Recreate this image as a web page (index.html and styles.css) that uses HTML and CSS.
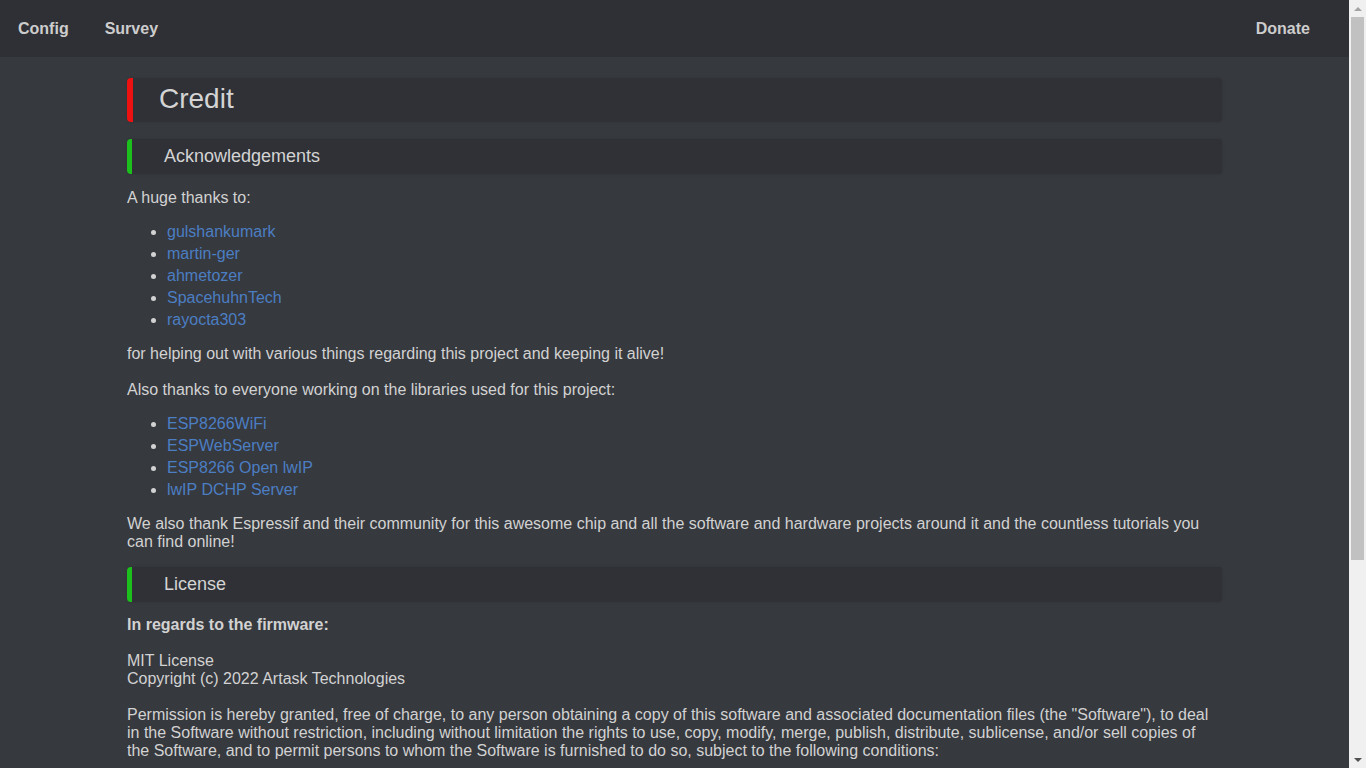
FILE: index.html
```html
<!DOCTYPE html>
<html lang="en">
<head>
<meta charset="utf-8">
<title>Credit</title>
<link rel="stylesheet" href="styles.css">
</head>
<body>
<nav class="topnav">
  <a class="nav-link" href="#">Config</a>
  <a class="nav-link" href="#">Survey</a>
  <span class="nav-spacer"></span>
  <a class="nav-link" href="#">Donate</a>
</nav>
<main class="content">
  <h1 class="heading heading-main">Credit</h1>

  <h2 class="heading heading-sub">Acknowledgements</h2>
  <p>A huge thanks to:</p>
  <ul class="links">
    <li><a href="#">gulshankumark</a></li>
    <li><a href="#">martin-ger</a></li>
    <li><a href="#">ahmetozer</a></li>
    <li><a href="#">SpacehuhnTech</a></li>
    <li><a href="#">rayocta303</a></li>
  </ul>
  <p>for helping out with various things regarding this project and keeping it alive!</p>
  <p class="spaced">Also thanks to everyone working on the libraries used for this project:</p>
  <ul class="links">
    <li><a href="#">ESP8266WiFi</a></li>
    <li><a href="#">ESPWebServer</a></li>
    <li><a href="#">ESP8266 Open lwIP</a></li>
    <li><a href="#">lwIP DCHP Server</a></li>
  </ul>
  <p>We also thank Espressif and their community for this awesome chip and all the software and hardware projects around it and the countless tutorials you can find online!</p>

  <h2 class="heading heading-sub heading-license">License</h2>
  <p class="license"><b>In regards to the firmware:</b><br><br>MIT License<br>Copyright (c) 2022 Artask Technologies<br><br>Permission is hereby granted, free of charge, to any person obtaining a copy of this software and associated documentation files (the "Software"), to deal in the Software without restriction, including without limitation the rights to use, copy, modify, merge, publish, distribute, sublicense, and/or sell copies of the Software, and to permit persons to whom the Software is furnished to do so, subject to the following conditions:<br><br>The above copyright notice and this permission notice shall be included in all copies or substantial portions of the Software.<br><br>THE SOFTWARE IS PROVIDED "AS IS", WITHOUT WARRANTY OF ANY KIND, EXPRESS OR IMPLIED, INCLUDING BUT NOT LIMITED TO THE WARRANTIES OF MERCHANTABILITY, FITNESS FOR A PARTICULAR PURPOSE AND NONINFRINGEMENT. IN NO EVENT SHALL THE AUTHORS OR COPYRIGHT HOLDERS BE LIABLE FOR ANY CLAIM, DAMAGES OR OTHER LIABILITY, WHETHER IN AN ACTION OF CONTRACT, TORT OR OTHERWISE, ARISING FROM, OUT OF OR IN CONNECTION WITH THE SOFTWARE OR THE USE OR OTHER DEALINGS IN THE SOFTWARE.</p>
</main>
<div class="fake-scrollbar" aria-hidden="true">
  <span class="sb-arrow sb-up"></span>
  <span class="sb-track"><span class="sb-thumb"></span></span>
  <span class="sb-arrow sb-down"></span>
</div>
</body>
</html>
```

FILE: styles.css
```css
html {
  background: #36393e;
}
body {
  margin: 0 17px 0 0;
  background: #36393e;
  color: #d2d2d2;
  font-family: "Liberation Sans", Arial, sans-serif;
  font-size: 16px;
}
.topnav {
  display: flex;
  align-items: center;
  height: 57px;
  background: #2f3035;
  padding-right: 21px;
}
.nav-link {
  padding: 0 18px;
  color: #cdcdcd;
  font-weight: bold;
  text-decoration: none;
  line-height: 57px;
}
.nav-spacer {
  flex: 1;
}
.content {
  max-width: 1095px;
  margin: 0 auto;
  padding: 21px 0 40px;
}
.heading {
  background: #2f3136;
  border-radius: 4px;
  font-weight: normal;
  color: #d4d4d4;
  box-shadow: 0 0 3px rgba(0, 0, 0, 0.12);
}
.heading-main {
  margin: 0 0 17px;
  height: 44px;
  line-height: 42px;
  font-size: 28px;
  padding-left: 26px;
  border-left: 6px solid #ee1111;
}
.heading-sub {
  margin: 0 0 15px;
  height: 35px;
  line-height: 34px;
  font-size: 18px;
  padding-left: 32px;
  border-left: 5px solid #1cc01c;
}
.heading-license {
  margin-top: 16px;
  margin-bottom: 14px;
}
p {
  margin: 0 0 16px;
  line-height: 18px;
}
p.spaced {
  margin-top: 18px;
}
.links {
  margin: 0 0 16px;
  padding-left: 40px;
  line-height: 18px;
}
.links li + li {
  margin-top: 4px;
}
.links a {
  color: #4c7ec3;
  text-decoration: none;
}
.license {
  margin-bottom: 0;
}

/* emulated classic browser scrollbar shown in the reference */
.fake-scrollbar {
  position: fixed;
  top: 0;
  right: 0;
  bottom: 0;
  width: 17px;
  background: #f0f0f0;
  display: flex;
  flex-direction: column;
}
.sb-arrow {
  height: 17px;
  flex: none;
  display: flex;
  align-items: center;
  justify-content: center;
}
.sb-up::before {
  content: "";
  border-left: 4px solid transparent;
  border-right: 4px solid transparent;
  border-bottom: 4px solid #a3a3a3;
}
.sb-down::before {
  content: "";
  border-left: 4px solid transparent;
  border-right: 4px solid transparent;
  border-top: 4px solid #505050;
}
.sb-track {
  flex: 1;
  padding: 0 2px;
}
.sb-thumb {
  display: block;
  height: 543px;
  background: #c1c1c1;
}
```
